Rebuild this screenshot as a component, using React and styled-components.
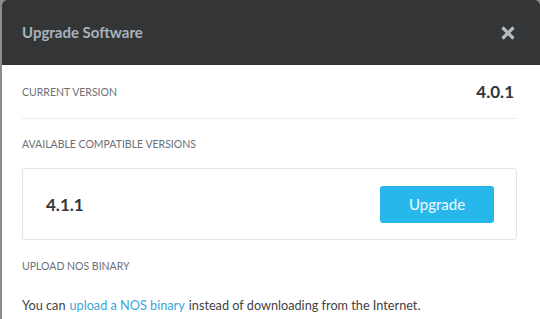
import React from 'react';
import styled, { createGlobalStyle } from 'styled-components';

const GlobalStyle = createGlobalStyle`
  html, body {
    margin: 0;
    padding: 0;
    background: #8c8c8c;
    overflow: hidden;
  }
  body {
    font-family: Lato, "Open Sans", "Liberation Sans", sans-serif;
  }
`;

const Modal = styled.div`
  margin-left: 2px;
  width: 538px;
  height: 319px;
  background: #ffffff;
  border-radius: 5px 5px 0 0;
  overflow: hidden;
`;

const Header = styled.div`
  height: 65px;
  background: #343537;
  display: flex;
  align-items: center;
  justify-content: space-between;
  padding: 0 24px 0 20px;
`;

const Title = styled.h3`
  margin: 0 0 1px;
  font-size: 15px;
  font-weight: 700;
  color: #a8b3bc;
`;

const Close = styled.button`
  border: 0;
  background: none;
  padding: 0;
  width: 16px;
  height: 16px;
  display: flex;
  cursor: pointer;
`;

const Body = styled.div`
  padding: 0 23px 0 20px;
`;

const Row = styled.div`
  display: flex;
  align-items: center;
  justify-content: space-between;
  height: 53px;
  padding-right: 3px;
  border-bottom: 1px solid ${(p) => (p.divided ? '#ececec' : 'transparent')};
`;

const Label = styled.div`
  font-size: 10.5px;
  color: #6c7075;
  text-transform: uppercase;
`;

const SectionLabel = styled(Label)`
  height: ${(p) => p.h}px;
  display: flex;
  align-items: center;
`;

const Version = styled.span`
  font-size: 17px;
  font-weight: 700;
  color: #333538;
`;

const Card = styled.div`
  height: 70px;
  border: 1px solid #e4e4e4;
  border-radius: 3px;
  display: flex;
  align-items: center;
  justify-content: space-between;
  padding: 0 22px 0 23px;
`;

const PrimaryButton = styled.button`
  width: 114px;
  height: 37px;
  border: 0;
  border-radius: 3px;
  background: #27b7ea;
  color: #f4fbff;
  font-family: inherit;
  font-size: 15px;
  cursor: pointer;
`;

const Text = styled.p`
  margin: 0;
  font-size: 12.7px;
  color: #3f4246;
  height: 28px;
  display: flex;
  align-items: center;
`;

const Link = styled.a`
  color: #3aa6d9;
  text-decoration: none;
  margin: 0 4px;
`;

const CloseIcon = () => (
  <svg width="16" height="16" viewBox="0 0 16 16">
    <path d="M2.5 2.5 L13.5 13.5 M13.5 2.5 L2.5 13.5" stroke="#b4bcc3" strokeWidth="3.2" />
  </svg>
);

export default function App() {
  return (
    <>
      <GlobalStyle />
      <Modal>
        <Header>
          <Title>Upgrade Software</Title>
          <Close aria-label="Close"><CloseIcon /></Close>
        </Header>
        <Body>
          <Row divided>
            <Label>Current Version</Label>
            <Version>4.0.1</Version>
          </Row>
          <SectionLabel h={49}>Available Compatible Versions</SectionLabel>
          <Card>
            <Version>4.1.1</Version>
            <PrimaryButton>Upgrade</PrimaryButton>
          </Card>
          <SectionLabel h={51}>Upload NOS Binary</SectionLabel>
          <Text>
            You can<Link href="#">upload a NOS binary</Link>instead of downloading from the Internet.
          </Text>
        </Body>
      </Modal>
    </>
  );
}
